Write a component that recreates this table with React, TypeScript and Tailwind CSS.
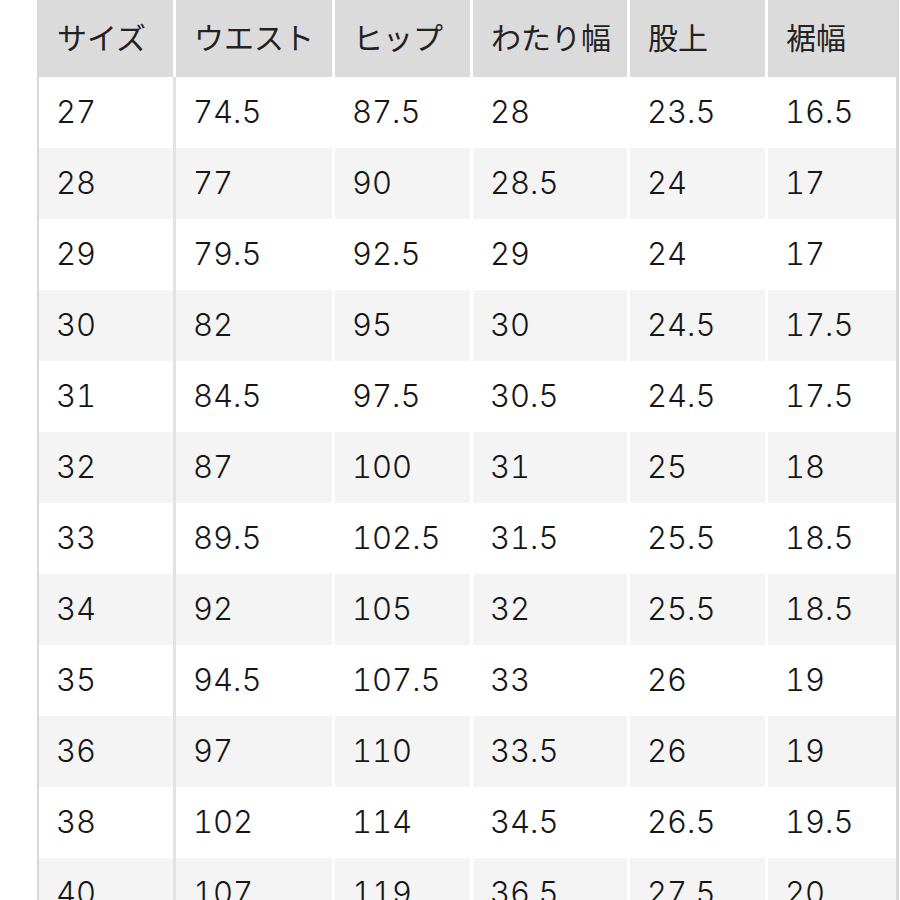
const headers = ["サイズ", "ウエスト", "ヒップ", "わたり幅", "股上", "裾幅"];

const rows: string[][] = [
  ["27", "74.5", "87.5", "28", "23.5", "16.5"],
  ["28", "77", "90", "28.5", "24", "17"],
  ["29", "79.5", "92.5", "29", "24", "17"],
  ["30", "82", "95", "30", "24.5", "17.5"],
  ["31", "84.5", "97.5", "30.5", "24.5", "17.5"],
  ["32", "87", "100", "31", "25", "18"],
  ["33", "89.5", "102.5", "31.5", "25.5", "18.5"],
  ["34", "92", "105", "32", "25.5", "18.5"],
  ["35", "94.5", "107.5", "33", "26", "19"],
  ["36", "97", "110", "33.5", "26", "19"],
  ["38", "102", "114", "34.5", "26.5", "19.5"],
  ["40", "107", "119", "36.5", "27.5", "20"],
];

// column widths between the 3px white gaps
const widths = ["w-[134px]", "w-[156px]", "w-[135px]", "w-[154px]", "w-[135px]", "w-[128px]"];

export default function App() {
  return (
    <div
      className="h-[900px] w-[900px] overflow-hidden bg-white pl-[37px] text-[30px] text-[#161616]"
      style={{ fontFamily: 'Inter, "Noto Sans CJK JP", sans-serif' }}
    >
      <div className="flex w-[862px] flex-col border-l-2 border-r-[3px] border-[#d8d8d8]">
        {/* 見出し */}
        <div className="flex h-[77px] gap-[3px]">
          {headers.map((h, i) => (
            <div
              key={h}
              className={`${widths[i]} flex shrink-0 items-center bg-[#dbdbdb] pl-[18px] text-[#222]`}
            >
              {h}
            </div>
          ))}
        </div>

        {rows.map((r, ri) => (
          <div key={r[0]} className="flex h-[71px] shrink-0 gap-[3px]">
            {r.map((v, ci) => (
              <div
                key={ci}
                className={`${widths[ci]} flex shrink-0 items-center pl-[17px] text-[31px] font-light tabular-nums ${
                  ri % 2 === 1 ? "bg-[#f4f4f4]" : "bg-white"
                } ${ci === 0 ? "shadow-[3px_0_0_0_#e2e2e2]" : ""}`}
              >
                {v}
              </div>
            ))}
          </div>
        ))}
      </div>
    </div>
  );
}
